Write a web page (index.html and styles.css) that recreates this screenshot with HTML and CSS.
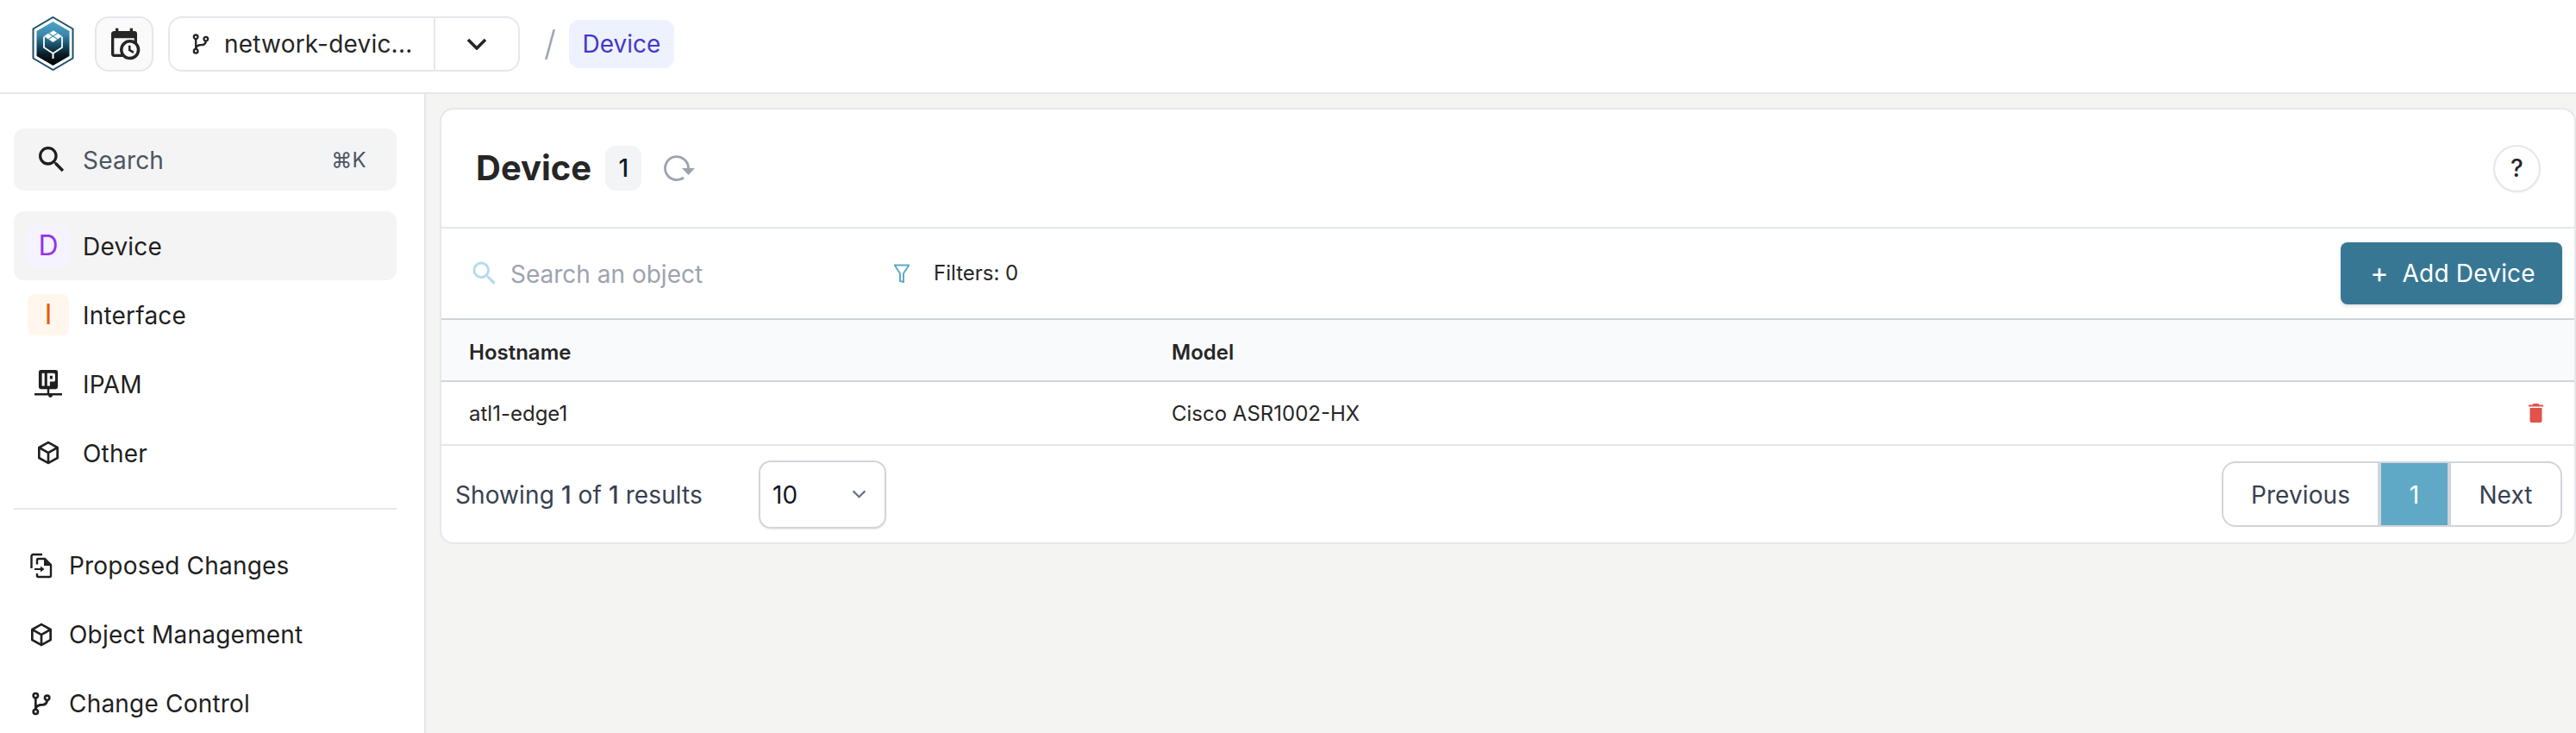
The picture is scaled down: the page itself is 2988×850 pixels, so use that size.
FILE: index.html
```html
<!DOCTYPE html>
<html lang="en">
<head>
<meta charset="utf-8">
<title>Device</title>
<link rel="stylesheet" href="styles.css">
</head>
<body>
<header class="topbar">
  <svg class="logo" viewBox="0 0 49 63" aria-hidden="true">
    <defs>
      <linearGradient id="hexfill" x1="0" y1="0" x2="0" y2="1">
        <stop offset="0" stop-color="#4fa6cb"/>
        <stop offset="0.3" stop-color="#3a87ab"/>
        <stop offset="0.55" stop-color="#174a63"/>
        <stop offset="0.75" stop-color="#0a1c27"/>
        <stop offset="1" stop-color="#000"/>
      </linearGradient>
    </defs>
    <polygon points="24.5,1 47.5,14.5 47.5,48.5 24.5,62 1.5,48.5 1.5,14.5" fill="#fff" stroke="#1f4f68" stroke-width="2"/>
    <polygon points="24.5,6 43.5,17 43.5,46 24.5,57 5.5,46 5.5,17" fill="url(#hexfill)"/>
    <path d="M14 23.5V36l10.5 7 10.5-7V23.5" fill="none" stroke="#fff" stroke-width="1.8"/>
    <path d="M24.5 43v6" stroke="#fff" stroke-width="2"/>
    <path d="M24.5 16l10.5 7-10.500 7L14 23z" fill="#fff"/>
    <path d="M19.300 19.500l10.500 7M24.500 16l-5.200 3.500M29.700 19.500L19.200 26.500M24.500 23l5.300 3.500" stroke="#4a97ba" stroke-width="1.200" fill="none"/>
  </svg>
  <button class="icon-btn" type="button">
    <svg class="i40" viewBox="0 0 24 24"><path d="M15,13H16.5V15.82L18.94,17.23L18.19,18.53L15,16.69V13M19,8H5V19H9.67C9.24,18.09 9,17.07 9,16A7,7 0 0,1 16,9C17.07,9 18.09,9.24 19,9.67V8M5,21C3.89,21 3,20.1 3,19V5C3,3.89 3.89,3 5,3H6V1H8V3H16V1H18V3H19A2,2 0 0,1 21,5V11.1C22.24,12.36 23,14.09 23,16A7,7 0 0,1 16,23C14.09,23 12.36,22.24 11.1,21H5M16,11.15A4.85,4.85 0 0,0 11.15,16C11.15,18.68 13.32,20.85 16,20.85A4.85,4.85 0 0,0 20.85,16C20.85,13.32 18.68,11.15 16,11.15Z"/></svg>
  </button>
  <div class="branch">
    <div class="branch-name">
      <svg class="i28" viewBox="0 0 24 24"><path d="M13,14C9.64,14 8.54,15.35 8.18,16.24C9.25,16.7 10,17.76 10,19A3,3 0 0,1 7,22A3,3 0 0,1 4,19C4,17.69 4.83,16.58 6,16.17V7.83C4.83,7.42 4,6.31 4,5A3,3 0 0,1 7,2A3,3 0 0,1 10,5C10,6.31 9.17,7.42 8,7.83V13.12C8.88,12.47 10.16,12 12,12C14.67,12 15.56,10.66 15.85,9.77C14.77,9.32 14,8.25 14,7A3,3 0 0,1 17,4A3,3 0 0,1 20,7C20,8.34 19.12,9.5 17.91,9.86C17.65,11.29 16.68,14 13,14M7,18A1,1 0 0,0 6,19A1,1 0 0,0 7,20A1,1 0 0,0 8,19A1,1 0 0,0 7,18M7,4A1,1 0 0,0 6,5A1,1 0 0,0 7,6A1,1 0 0,0 8,5A1,1 0 0,0 7,4M17,6A1,1 0 0,0 16,7A1,1 0 0,0 17,8A1,1 0 0,0 18,7A1,1 0 0,0 17,6Z"/></svg>
      <span>network-devic...</span>
    </div>
    <div class="branch-toggle">
      <svg class="chev" viewBox="0 0 24 14"><path d="M2 2l10 10L22 2" fill="none" stroke="currentColor" stroke-width="3.600"/></svg>
    </div>
  </div>
  <span class="slash">/</span>
  <span class="crumb">Device</span>
</header>

<div class="shell">
  <aside class="sidebar">
    <div class="side-search">
      <svg class="i40" viewBox="0 0 24 24"><path d="M9.5,3A6.5,6.5 0 0,1 16,9.5C16,11.11 15.41,12.59 14.44,13.73L14.71,14H15.5L20.5,19L19,20.5L14,15.5V14.71L13.73,14.44C12.59,15.41 11.11,16 9.5,16A6.5,6.5 0 0,1 3,9.5A6.5,6.5 0 0,1 9.5,3M9.5,5C7,5 5,7 5,9.5C5,12 7,14 9.5,14C12,14 14,12 14,9.5C14,7 12,5 9.5,5Z"/></svg>
      <span class="side-search-label">Search</span>
      <kbd class="kbd">⌘K</kbd>
    </div>
    <nav class="nav">
      <a class="nav-item is-active"><span class="tile tile-purple">D</span><span class="nudge">Device</span></a>
      <a class="nav-item"><span class="tile tile-orange">I</span><span class="nudge">Interface</span></a>
      <a class="nav-item"><span class="tile">
        <svg class="i32" viewBox="0 0 26 26"><path fill-rule="evenodd" d="M6 0h14a2 2 0 0 1 2 2v14a2 2 0 0 1-2 2h-6v4h12v2h-9a2 2 0 0 1-4 0H0v-2h12v-4H6a2 2 0 0 1-2-2V2a2 2 0 0 1 2-2zm1 3v12h2.500V3zm5 0v12h2.500v-4H18a1.500 1.500 0 0 0 1.500-1.500v-5A1.500 1.500 0 0 0 18 3zm2.500 2.500H17v3h-2.500z"/></svg>
      </span><span class="nudge">IPAM</span></a>
      <a class="nav-item"><span class="tile">
        <svg class="i32" viewBox="0 0 24 24"><path d="M21,16.5C21,16.88 20.79,17.21 20.47,17.38L12.57,21.82C12.41,21.94 12.21,22 12,22C11.79,22 11.59,21.94 11.43,21.82L3.53,17.38C3.21,17.21 3,16.88 3,16.5V7.5C3,7.12 3.21,6.79 3.53,6.62L11.43,2.18C11.59,2.06 11.79,2 12,2C12.21,2 12.41,2.06 12.57,2.18L20.47,6.62C20.79,6.79 21,7.12 21,7.5V16.5M12,4.15L6.04,7.5L12,10.85L17.96,7.5L12,4.15M5,15.91L11,19.29V12.58L5,9.21V15.91M19,15.91V9.21L13,12.58V19.29L19,15.91Z"/></svg>
      </span><span class="nudge">Other</span></a>
    </nav>
    <hr class="divider">
    <nav class="nav">
      <a class="nav-item nav-item-sm">
        <svg class="i32" viewBox="0 0 32 32"><path d="M17 3H6.500a2 2 0 0 0-2 2v14" fill="none" stroke="currentColor" stroke-width="2.400"/><path d="M11 14.500V9.500A1.500 1.500 0 0 1 12.500 8H20l7 7v12.500a1.500 1.500 0 0 1-1.500 1.500h-13a1.500 1.500 0 0 1-1.500-1.500V25" fill="none" stroke="currentColor" stroke-width="2.400"/><path d="M19 8v8h8z"/><path d="M8 20h10" fill="none" stroke="currentColor" stroke-width="2"/><path d="M15 16.500l4.500 3.500-4.500 3.500z"/></svg>
        <span>Proposed Changes</span>
      </a>
      <a class="nav-item nav-item-sm">
        <svg class="i32" viewBox="0 0 24 24"><path d="M21,16.5C21,16.88 20.79,17.21 20.47,17.38L12.57,21.82C12.41,21.94 12.21,22 12,22C11.79,22 11.59,21.94 11.43,21.82L3.53,17.38C3.21,17.21 3,16.88 3,16.5V7.5C3,7.12 3.21,6.79 3.53,6.62L11.43,2.18C11.59,2.06 11.79,2 12,2C12.21,2 12.41,2.06 12.57,2.18L20.47,6.62C20.79,6.79 21,7.12 21,7.5V16.5M12,4.15L6.04,7.5L12,10.85L17.96,7.5L12,4.15M5,15.91L11,19.29V12.58L5,9.21V15.91M19,15.91V9.21L13,12.58V19.29L19,15.91Z"/></svg>
        <span>Object Management</span>
      </a>
      <a class="nav-item nav-item-sm">
        <svg class="i32" viewBox="0 0 24 24"><path d="M13,14C9.64,14 8.54,15.35 8.18,16.24C9.25,16.7 10,17.76 10,19A3,3 0 0,1 7,22A3,3 0 0,1 4,19C4,17.69 4.83,16.58 6,16.17V7.83C4.83,7.42 4,6.31 4,5A3,3 0 0,1 7,2A3,3 0 0,1 10,5C10,6.31 9.17,7.42 8,7.83V13.12C8.88,12.47 10.16,12 12,12C14.67,12 15.56,10.66 15.85,9.77C14.77,9.32 14,8.25 14,7A3,3 0 0,1 17,4A3,3 0 0,1 20,7C20,8.34 19.12,9.5 17.91,9.86C17.65,11.29 16.68,14 13,14M7,18A1,1 0 0,0 6,19A1,1 0 0,0 7,20A1,1 0 0,0 8,19A1,1 0 0,0 7,18M7,4A1,1 0 0,0 6,5A1,1 0 0,0 7,6A1,1 0 0,0 8,5A1,1 0 0,0 7,4M17,6A1,1 0 0,0 16,7A1,1 0 0,0 17,8A1,1 0 0,0 18,7A1,1 0 0,0 17,6Z"/></svg>
        <span>Change Control</span>
      </a>
    </nav>
  </aside>

  <main class="main">
    <section class="card">
      <div class="card-head">
        <h1 class="title">Device</h1>
        <span class="count">1</span>
        <svg class="refresh" viewBox="0 0 36 36"><path d="M23 29A13.500 13.500 0 1 1 28.500 18" fill="none" stroke="#9ca3af" stroke-width="2.800"/><path d="M21 18h15l-7.500 8z" fill="#9ca3af"/></svg>
        <button class="help" type="button">?</button>
      </div>
      <div class="toolbar">
        <div class="obj-search">
          <svg class="i36" viewBox="0 0 24 24"><path d="M9.5,3A6.5,6.5 0 0,1 16,9.5C16,11.11 15.41,12.59 14.44,13.73L14.71,14H15.5L20.5,19L19,20.5L14,15.5V14.71L13.73,14.44C12.59,15.41 11.11,16 9.5,16A6.5,6.5 0 0,1 3,9.5A6.5,6.5 0 0,1 9.5,3M9.5,5C7,5 5,7 5,9.5C5,12 7,14 9.5,14C12,14 14,12 14,9.5C14,7 12,5 9.5,5Z"/></svg>
          <span class="nudge">Search an object</span>
        </div>
        <div class="filters">
          <svg class="filter-icon" viewBox="0 0 20 22"><path d="M1 1.500h18M2 2l6 9v9l4 1V11l6-9" fill="none" stroke="#5fa9c7" stroke-width="2"/></svg>
          <span>Filters: 0</span>
        </div>
        <button class="add" type="button"><span class="plus">+</span><span>Add Device</span></button>
      </div>
      <table class="grid">
        <thead>
          <tr><th class="col-host">Hostname</th><th>Model</th><th class="col-del"></th></tr>
        </thead>
        <tbody>
          <tr>
            <td>atl1-edge1</td>
            <td>Cisco ASR1002-HX</td>
            <td class="col-del"><svg class="trash" viewBox="0 0 17 22"><path d="M5.500 0h6l1 1.500H17v2H0v-2h4.500zM1.500 5h14v15a2 2 0 0 1-2 2h-10a2 2 0 0 1-2-2z"/></svg></td>
          </tr>
        </tbody>
      </table>
      <div class="foot">
        <span class="showing nudge">Showing <b>1</b> of <b>1</b> results</span>
        <div class="size">
          <span class="nudge">10</span>
          <svg class="size-chev" viewBox="0 0 12 8"><path d="M1 1l5 5 5-5" fill="none" stroke="#6b7280" stroke-width="1.600"/></svg>
        </div>
        <div class="pager">
          <span class="pg pg-prev nudge">Previous</span>
          <span class="pg pg-cur nudge">1</span>
          <span class="pg pg-next nudge">Next</span>
        </div>
      </div>
    </section>
  </main>
</div>
</body>
</html>
```
FILE: styles.css
```css
* { box-sizing: border-box; }
html, body { height: 100%; }
body {
  margin: 0;
  height: 850px;
  overflow: hidden;
  background: #fff;
  color: #1f1f1f;
  font-family: "Inter", "Liberation Sans", sans-serif;
  font-size: 28px;
  line-height: 40px;
  display: flex;
  flex-direction: column;
}
svg { display: block; fill: currentColor; flex: none; }
button { font: inherit; color: inherit; padding: 0; cursor: pointer; }
.i28 { width: 28px; height: 28px; }
.i32 { width: 32px; height: 32px; }
.i36 { width: 36px; height: 36px; }
.i40 { width: 40px; height: 40px; }

/* top bar */
.topbar {
  height: 109px;
  flex: none;
  border-bottom: 2px solid #e5e7eb;
  padding: 19px 0 0 37px;
  display: flex;
  align-items: flex-start;
}
.logo { width: 49px; height: 63px; margin-top: 0; }
.icon-btn {
  width: 68px;
  height: 64px;
  margin-left: 24px;
  border: 2px solid #e5e7eb;
  border-radius: 16px;
  background: #fafafa;
  display: flex;
  align-items: center;
  justify-content: center;
  color: #262626;
}
.branch {
  margin-left: 17px;
  width: 408px;
  height: 64px;
  border: 2px solid #e5e7eb;
  border-radius: 16px;
  display: flex;
}
.branch-name {
  width: 308px;
  border-right: 2px solid #e5e7eb;
  padding-left: 22px;
  display: flex;
  align-items: center;
  gap: 13px;
  color: #262626;
  letter-spacing: .2px;
}
.branch-toggle {
  flex: 1;
  display: flex;
  align-items: center;
  justify-content: center;
}
.chev { width: 24px; height: 14px; color: #262626; }
.slash {
  margin: 12px 0 0 28px;
  font-size: 40px;
  font-weight: 300;
  color: #9ca3af;
  width: 29px;
}
.crumb {
  margin-top: 4px;
  height: 56px;
  width: 122px;
  background: #eef2ff;
  border-radius: 12px;
  color: #4338ca;
  display: flex;
  align-items: center;
  justify-content: center;
}

/* frame */
.shell { flex: 1; display: flex; min-height: 0; background: #f4f4f3; }
.sidebar {
  width: 494px;
  flex: none;
  background: #fff;
  border-right: 2px solid #e5e7eb;
  padding: 40px 32px 0 16px;
  overflow: hidden;
  letter-spacing: .2px;
}
.side-search {
  height: 72px;
  background: #f4f4f4;
  border-radius: 12px;
  padding: 0 24px;
  display: flex;
  align-items: center;
  gap: 16px;
  margin-bottom: 24px;
}
.side-search .i40 { color: #1f1f1f; }
.side-search-label { flex: 1; color: #4b5563; padding-top: 2px; }
.kbd {
  width: 63px;
  height: 37px;
  border-radius: 8px;
  background: #f3f4f6;
  color: #4b5563;
  font: 24px/37px "Inter", "DejaVu Sans", sans-serif;
  text-align: center;
}
.nav-item {
  height: 80px;
  padding-left: 16px;
  border-radius: 12px;
  display: flex;
  align-items: center;
  gap: 16px;
  color: #1f1f1f;
}
.nudge { padding-top: 2px; }
.is-active { background: #f4f4f4; }
.tile {
  width: 48px;
  height: 48px;
  border-radius: 8px;
  display: flex;
  align-items: center;
  justify-content: center;
  flex: none;
  font-size: 32px;
  letter-spacing: 0;
}
.tile-purple { background: #f5f3ff; color: #9333ea; }
.tile-orange { background: #fff7ed; color: #ea580c; }
.divider {
  margin: 24px 0 25px;
  height: 2px;
  border: 0;
  background: #e5e7eb;
}

/* card */
.main { flex: 1; min-width: 0; padding: 16px 0 0 16px; }
.card {
  background: #fff;
  border: 2px solid #e5e7eb;
  border-radius: 16px;
}
.card-head {
  height: 136px;
  padding: 0 39px 0 40px;
  display: flex;
  align-items: center;
}
.title {
  margin: 0;
  font-size: 40px;
  line-height: 56px;
  font-weight: 700;
  color: #262626;
}
.count {
  margin-left: 16px;
  width: 42px;
  height: 52px;
  border-radius: 12px;
  background: #f3f4f6;
  color: #111827;
  font-size: 28px;
  font-weight: 500;
  display: flex;
  align-items: center;
  justify-content: center;
}
.refresh { width: 36px; height: 36px; margin-left: 26px; }
.help {
  margin-left: auto;
  width: 55px;
  height: 55px;
  border: 2px solid #e5e7eb;
  border-radius: 50%;
  background: #fff;
  font-size: 28px;
  font-weight: 500;
  color: #262626;
  box-shadow: 0 1px 2px rgba(0,0,0,.05);
}
.toolbar {
  height: 108px;
  border-top: 2px solid #e5e7eb;
  border-bottom: 2px solid #d1d5db;
  padding: 0 14px 0 32px;
  display: flex;
  align-items: center;
}
.obj-search {
  width: 492px;
  display: flex;
  align-items: center;
  gap: 12px;
  color: #9ca3af;
}
.obj-search .i36 { color: #b5dcea; }
.filters {
  display: flex;
  align-items: center;
  gap: 27px;
  font-size: 24px;
  color: #262626;
}
.filter-icon { width: 20px; height: 22px; }
.add {
  margin-left: auto;
  width: 257px;
  height: 72px;
  border: 0;
  border-radius: 8px;
  background: #387794;
  color: #fff;
  letter-spacing: .2px;
  padding-left: 3px;
  display: flex;
  align-items: center;
  justify-content: center;
  gap: 16px;
  box-shadow: 0 2px 4px rgba(0,0,0,.12);
}
.plus { font-size: 32px; }

/* table */
.grid {
  width: 100%;
  table-layout: fixed;
  border-collapse: separate;
  border-spacing: 0;
  font-size: 24px;
  line-height: 32px;
}
.grid th {
  height: 72px;
  text-align: left;
  font-weight: 600;
  padding: 6px 0 0 32px;
  background: #f9fafb;
  color: #262626;
  border-bottom: 2px solid #d1d5db;
}
.grid td {
  height: 74px;
  padding: 2px 0 0 32px;
  color: #262626;
  border-bottom: 2px solid #e5e7eb;
}
.grid th:nth-child(2), .grid td:nth-child(2) { padding-left: 0; }
.col-host { width: 847px; }
.grid .col-del { width: 53px; padding: 0; }
.trash { width: 17px; height: 22px; color: #e0524a; }

/* footer */
.foot {
  height: 112px;
  padding: 0 14px 0 16px;
  display: flex;
  align-items: center;
  letter-spacing: .1px;
}
.showing { width: 352px; color: #374151; }
.showing b { font-weight: 500; }
.size {
  width: 148px;
  height: 79px;
  border: 2px solid #d1d5db;
  border-radius: 14px;
  padding: 0 21px 0 14px;
  display: flex;
  align-items: center;
  justify-content: space-between;
  color: #111827;
  box-shadow: 0 1px 2px rgba(0,0,0,.08);
}
.size-chev { width: 17px; height: 11px; }
.pager {
  margin-left: auto;
  height: 76px;
  width: 395px;
  border: 2px solid #d1d5db;
  border-radius: 16px;
  display: flex;
  overflow: hidden;
  color: #374151;
}
.pg { display: flex; align-items: center; justify-content: center; }
.pg-prev { width: 183px; border-right: 4px solid #d1d5db; }
.pg-cur { width: 81px; border-right: 4px solid #d1d5db; background: #5fa9c7; color: #fff; }
.pg-next { flex: 1; }
```
